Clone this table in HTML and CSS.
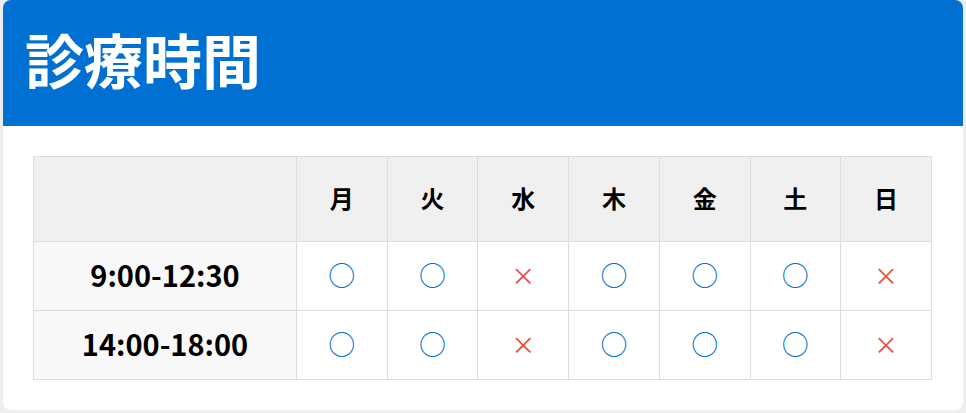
FILE: index.html
```html
<!DOCTYPE html>
<html lang="ja">
<head>
<meta charset="utf-8">
<link rel="stylesheet" href="styles.css">
</head>
<body>
<div class="card">
  <div class="card-head"><h1 class="title">診療時間</h1></div>
  <div class="card-body">
    <table class="hours">
      <thead>
        <tr><th class="blank"></th><th>月</th><th>火</th><th>水</th><th>木</th><th>金</th><th>土</th><th>日</th></tr>
      </thead>
      <tbody>
        <tr><th class="time">9:00-12:30</th><td class="ok">○</td><td class="ok">○</td><td class="ng">×</td><td class="ok">○</td><td class="ok">○</td><td class="ok">○</td><td class="ng">×</td></tr>
        <tr><th class="time">14:00-18:00</th><td class="ok">○</td><td class="ok">○</td><td class="ng">×</td><td class="ok">○</td><td class="ok">○</td><td class="ok">○</td><td class="ng">×</td></tr>
      </tbody>
    </table>
  </div>
</div>
</body>
</html>
```
FILE: styles.css
```css
html, body { margin: 0; padding: 0; }
body {
  background: #eeeeee;
  font-family: "Noto Sans CJK JP", "Noto Sans", sans-serif;
  padding: 0 3px;
}
.card {
  background: #ffffff;
  border-radius: 8px;
  overflow: hidden;
  height: 410px;
}
.card-head {
  background: #0070d2;
  height: 126px;
  box-sizing: border-box;
  display: flex;
  align-items: center;
  padding: 0 0 10px 22px;
}
.title {
  margin: 0;
  color: #fff;
  font-size: 59px;
  font-weight: 700;
  line-height: 1;
}
.card-body { padding: 30px; }
.hours {
  border-collapse: collapse;
  width: 899px;
  table-layout: fixed;
}
.hours th, .hours td {
  border: 1px solid #dddddd;
  text-align: center;
  padding: 0 0 4px 0;
}
.hours thead th {
  background: #f0f0f0;
  height: 80px;
  font-size: 24px;
  font-weight: 700;
  color: #000;
}
.hours thead th.blank { width: 262px; }
.hours tbody th, .hours tbody td { height: 64px; }
.hours .time {
  background: #f8f8f8;
  font-size: 29px;
  font-weight: 700;
  color: #000;
}
.hours .ok { color: #0070d2; font-size: 27px; }
.hours .ng { color: #e74c3c; font-size: 24px; }
```
